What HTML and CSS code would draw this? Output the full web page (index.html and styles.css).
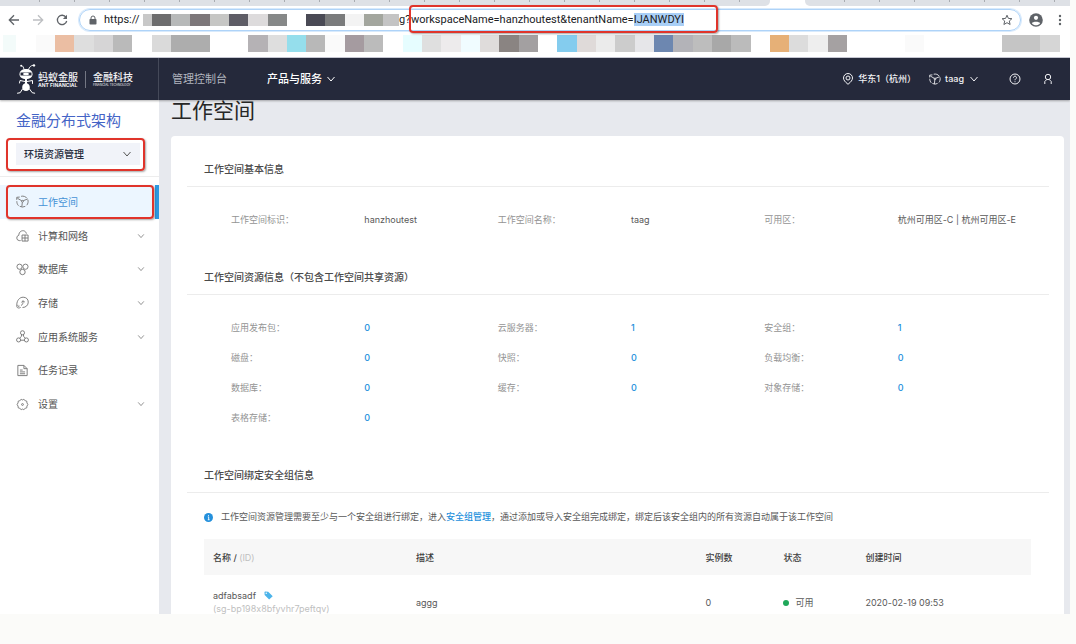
FILE: index.html
```html
<!DOCTYPE html>
<html lang="zh-CN">
<head>
<meta charset="utf-8">
<title>工作空间</title>
<link rel="stylesheet" href="styles.css">
</head>
<body>
<svg class="defs" aria-hidden="true">
  <symbol id="down" viewBox="0 0 10 10"><path d="M1.500 3 5 7l3.500-4"/></symbol>
  <symbol id="cube" viewBox="0 0 14 14"><path d="M.8 5.200V2.500L4 2.200M5.500 1.400C8 .8 10.500 1.700 11.800 3.500M12.800 5c.6 2.300.1 4.500-1.200 6M10 12.200l-3 .8-3-.8M2.700 11.500C1.500 10.300.8 8.500.9 6.700M1.500 3.500 6.300 6.300M7.700 6.200 12.500 4.300M6.800 7.800 6.300 12.800"/><circle cx="7" cy="6.800" r="1"/></symbol>
</svg>
<div class="window">
  <div class="tabs">
    <div class="tab-group tab-group-left"></div>
    <div class="tab-group tab-group-right"></div>
  </div>
  <div class="toolbar">
    <button class="tool" aria-label="后退"><svg width="12" height="12" viewBox="0 0 12 12"><path d="M11 6H1.500M6 1.300 1.300 6 6 10.700"/></svg></button>
    <button class="tool tool-off" aria-label="前进"><svg width="12" height="12" viewBox="0 0 12 12"><path d="M1 6h9.500M6 1.300 10.700 6 6 10.700"/></svg></button>
    <button class="tool" aria-label="刷新"><svg width="12" height="12" viewBox="0 0 12 12"><path d="M10 3.300A4.700 4.700 0 1 0 10.700 7"/><path d="M11 .8v4.100H6.900z" fill="currentColor" stroke="none"/></svg></button>
    <div class="address">
      <svg class="lock" width="8" height="10" viewBox="0 0 8 10"><rect x=".5" y="4" width="7" height="5.500" rx=".8" fill="#5f6368"/><path d="M2 4.500V3a2 2 0 0 1 4 0v1.500" fill="none" stroke="#5f6368"/></svg>
      <div class="url" role="textbox" aria-label="地址" contenteditable="true" spellcheck="false"><span class="scheme">https://</span><svg class="mask" width="256" height="12" viewBox="0 0 256 12" shape-rendering="crispEdges"><path fill="#c8c8c8" d="M0 0h9v12H0z"/><path fill="#6d6d6e" d="M9 0h19v12H9z"/><path fill="#b7b9b9" d="M28 0h19v12H28z"/><path fill="#7d777a" d="M47 0h20v12H47z"/><path fill="#c6c6c4" d="M67 0h19v12H67z"/><path fill="#5e5d66" d="M86 0h19v12H86z"/><path fill="#dddbdc" d="M105 0h20v12h-20z"/><path fill="#868888" d="M125 0h19v12h-19z"/><path fill="#4a4a55" d="M163 0h19v12h-19z"/><path fill="#7a7b7c" d="M182 0h20v12h-20z"/><path fill="#f3f3f3" d="M202 0h19v12h-19z"/><path fill="#a3a69e" d="M221 0h19v12h-19z"/><path fill="#c4c4c4" d="M240 0h16v12h-16z"/></svg><span class="tail">g?</span><span class="query">workspaceName=hanzhoutest&amp;tenantName=<mark>IJANWDYI</mark></span></div>
      <i class="callout callout-url"></i>
      <svg class="star" width="12" height="12" viewBox="0 0 12 12"><path d="m6 1.200 1.400 3.200 3.500.3-2.600 2.300.8 3.500L6 8.700l-3.100 1.800.8-3.500L1.100 4.700l3.500-.3z" fill="none" stroke="#5f6368"/></svg>
    </div>
    <button class="tool person" aria-label="用户"><svg width="14" height="14" viewBox="0 0 14 14"><circle cx="7" cy="7" r="6.800" fill="#5f6368" stroke="none"/><circle cx="7" cy="4.800" r="2.100" fill="#fff" stroke="none"/><path d="M2.900 10.300C3.700 8.300 10.300 8.300 11.100 10.300 9 13 5 13 2.900 10.300z" fill="#fff" stroke="none"/></svg></button>
    <button class="tool more" aria-label="更多"><svg width="4" height="12" viewBox="0 0 4 12"><g fill="#5f6368" stroke="none"><circle cx="2" cy="2" r="1.200"/><circle cx="2" cy="6" r="1.200"/><circle cx="2" cy="10" r="1.200"/></g></svg></button>
  </div>
  <div class="bookmarks">
    <svg width="1070" height="17" viewBox="0 0 1070 17" shape-rendering="crispEdges">
      <path fill="#f3fbfa" d="M3 0h13v17H3z"/><path fill="#fafafa" d="M36 0h19v17H36z"/><path fill="#ebbea3" d="M55 0h19v17H55z"/><path fill="#dedede" d="M74 0h20v17H74z"/><path fill="#d6d5d6" d="M94 0h19v17H94z"/><path fill="#bababa" d="M113 0h19v17h-19z"/>
      <path fill="#dadada" d="M152 0h19v17h-19z"/><path fill="#adadad" d="M171 0h39v17h-39z"/>
      <path fill="#b5b2b5" d="M248 0h20v17h-20z"/><path fill="#dedede" d="M268 0h19v17h-19z"/><path fill="#95deec" d="M287 0h19v17h-19z"/><path fill="#b8b8b8" d="M306 0h19v17h-19z"/><path fill="#fafafa" d="M325 0h20v17h-20z"/><path fill="#a59ba0" d="M345 0h19v17h-19z"/><path fill="#bbb" d="M364 0h19v17h-19z"/>
      <path fill="#e6fdff" d="M403 0h19v17h-19z"/><path fill="#dfdfdf" d="M422 0h19v17h-19z"/><path fill="#edebec" d="M441 0h20v17h-20z"/><path fill="#f0fcff" d="M461 0h19v17h-19z"/><path fill="#dfdcdb" d="M480 0h19v17h-19z"/><path fill="#8a8482" d="M499 0h20v17h-20z"/><path fill="#a3a0a1" d="M519 0h19v17h-19z"/>
      <path fill="#84ccee" d="M557 0h20v17h-20z"/><path fill="#dfdad9" d="M577 0h19v17h-19z"/><path fill="#ebebeb" d="M596 0h19v17h-19z"/><path fill="#ccc" d="M615 0h20v17h-20z"/><path fill="#e6e6e9" d="M635 0h19v17h-19z"/><path fill="#6d87b0" d="M654 0h19v17h-19z"/><path fill="#b3b3b8" d="M673 0h20v17h-20z"/><path fill="#bdbdbd" d="M693 0h19v17h-19z"/><path fill="#a8a8a8" d="M712 0h19v17h-19z"/><path fill="#bbb" d="M731 0h20v17h-20z"/>
      <path fill="#e6b077" d="M770 0h19v17h-19z"/><path fill="#dcdcdc" d="M789 0h19v17h-19z"/><path fill="#eee" d="M808 0h20v17h-20z"/><path fill="#a5a1a2" d="M828 0h19v17h-19z"/><path fill="#fafafa" d="M905 0h19v17h-19z"/><path fill="#c5c5c5" d="M1002 0h38v17h-38z"/><path fill="#d6d6d6" d="M1040 0h20v17h-20z"/>
    </svg>
  </div>

  <header class="header">
    <a class="brand" href="#">
      <svg width="22" height="32" viewBox="0 0 22 32" fill="none" stroke="#fff" stroke-linecap="round">
        <path d="M8 6.500C7.500 4 7 3 5.800 2.700M12.500 6.500c1-2.500 2-3.800 4.500-4.300" stroke-width=".9"/><circle cx="5.200" cy="2.800" r="1" fill="#fff" stroke="none"/><circle cx="18" cy="2.400" r="1.200" fill="#fff" stroke="none"/>
        <path d="M10 6c4 0 6.500 2.200 6.500 5.200S14 16 10 16s-6.500-1.800-6.500-4.800S6 6 10 6z" fill="#fff" stroke="none"/><path d="M4.500 9.500h11v3h-11z" fill="#25293b" stroke="none"/><ellipse cx="10" cy="11" rx="3" ry="1.300" fill="#fff" stroke="none"/>
        <path d="M9 16h2v4.500H9zM10 20c2.500 0 3.800 2.300 3.800 4.500S12.300 28 10 28s-3.800-1.300-3.800-3.500S7.500 20 10 20z" fill="#fff" stroke="none"/>
        <path d="M9 18.500 4 17.500 3.500 20M11 18.500l5.500-1v3M6.500 26l-2.300 3.700-2.700.5M13.500 26l2.700 3.700 2.500.5"/>
      </svg>
      <span class="brand-part"><b>蚂蚁金服</b><small>ANT FINANCIAL</small></span>
      <span class="brand-part brand-sub"><b>金融科技</b><small>FINANCIAL TECHNOLOGY</small></span>
    </a>
    <nav class="nav">
      <a href="#">管理控制台</a>
      <button class="strong">产品与服务<svg class="icon" width="10" height="10"><use href="#down"/></svg></button>
    </nav>
    <div class="account">
      <button class="region"><svg class="icon" width="12" height="12" viewBox="0 0 12 12"><path d="M6 11.300C3 8.900 1.500 7 1.500 5a4.500 4.500 0 0 1 9 0C10.500 7 9 8.900 6 11.300z"/><circle cx="6" cy="5" r="2"/></svg>华东1（杭州）</button>
      <button class="space"><svg class="icon" width="12" height="12"><use href="#cube"/></svg>taag<svg class="icon" width="10" height="10"><use href="#down"/></svg></button>
      <button class="help" aria-label="帮助"><svg class="icon" width="12" height="12" viewBox="0 0 12 12"><circle cx="6" cy="6" r="5"/><path d="M4.500 4.700C4.500 2.700 7.500 2.700 7.500 4.700 7.500 5.800 6 5.900 6 7.200M6 8.300v.9"/></svg></button>
      <button aria-label="个人"><svg class="icon" width="10" height="12" viewBox="0 0 10 12"><circle cx="5" cy="4" r="2.700"/><path d="M3.800 6.500 1.800 8.500V11M6.200 6.500l2 2V11"/></svg></button>
    </div>
  </header>

  <div class="body">
    <aside class="side">
      <h2 class="side-title">金融分布式架构</h2>
      <div class="picker">
        <select aria-label="模块"><option>环境资源管理</option></select>
        <svg class="icon picker-icon" width="10" height="10"><use href="#down"/></svg>
        <i class="callout callout-picker"></i>
      </div>
      <nav class="menu">
        <a class="item active" href="#"><svg class="icon" width="13" height="13"><use href="#cube"/></svg><span>工作空间</span><i class="callout callout-item"></i></a>
        <a class="item" href="#"><svg class="icon" width="13" height="13" viewBox="0 0 14 14"><path d="M5 12.500H3.500A2.900 2.900 0 0 1 3 6.800C3.200.8 10.300.3 11.200 5M6.500 6.500H13V13H6.500zM6.500 9.700H13M9.700 6.500V13"/></svg><span>计算和网络</span><svg class="icon arrow" width="8" height="8"><use href="#down"/></svg></a>
        <a class="item" href="#"><svg class="icon" width="13" height="13" viewBox="0 0 14 14"><circle cx="3.800" cy="4" r="2.800"/><circle cx="10.200" cy="4" r="2.800"/><circle cx="7" cy="9.700" r="2.900"/></svg><span>数据库</span><svg class="icon arrow" width="8" height="8"><use href="#down"/></svg></a>
        <a class="item" href="#"><svg class="icon" width="13" height="13" viewBox="0 0 14 14"><path d="M5 12.300C2 13.800.5 12.500.8 9.500 1 4.500 4 1.300 7.700 1.300c3.500 0 5.500 2.300 5.500 5.300 0 3.200-2.500 5.800-6.200 5.800M3.800 10.800c-1.300 1-2 .3-1.800-1.300M5.500 10.200c1.700-.8 2.300-2.500 2-5M5.800 6.800l1.700-1.600 2 1.300"/></svg><span>存储</span><svg class="icon arrow" width="8" height="8"><use href="#down"/></svg></a>
        <a class="item" href="#"><svg class="icon" width="13" height="13" viewBox="0 0 14 14"><circle cx="7" cy="3" r="2.200"/><circle cx="2.800" cy="10.700" r="2.200"/><circle cx="11.200" cy="10.700" r="2.200"/><path d="M6 5 5.800 7 3.900 8.800M8 5l.2 2 1.900 1.800M5 11h4"/></svg><span>应用系统服务</span><svg class="icon arrow" width="8" height="8"><use href="#down"/></svg></a>
        <a class="item" href="#"><svg class="icon" width="13" height="13" viewBox="0 0 14 14"><path d="M2 1.500h6.500L12 5v7.500H2zM8.500 1.500V5H12M4.200 6.500h3M4.200 8.500h5.600M4.200 10.500h5.600"/></svg><span>任务记录</span></a>
        <a class="item" href="#"><svg class="icon" width="13" height="13" viewBox="0 0 14 14"><path d="m5.600 1.500 1.400.6 1.400-.6 1.500 1.300 1.700.6.200 1.900 1 1.700-1 1.700-.2 1.900-1.700.6-1.500 1.300-1.400-.6-1.400.6-1.500-1.300-1.700-.6-.2-1.900-1-1.700 1-1.700.2-1.900 1.700-.6z"/><circle cx="7" cy="7" r="1"/></svg><span>设置</span><svg class="icon arrow" width="8" height="8"><use href="#down"/></svg></a>
      </nav>
    </aside>

    <main class="main">
      <h1 class="title">工作空间</h1>
      <div class="card">
        <section>
          <h3 class="head">工作空间基本信息</h3>
          <dl class="facts">
            <dt>工作空间标识：</dt><dd>hanzhoutest</dd><dt>工作空间名称：</dt><dd>taag</dd><dt>可用区：</dt><dd>杭州可用区-C | 杭州可用区-E</dd>
          </dl>
        </section>
        <section>
          <h3 class="head">工作空间资源信息（不包含工作空间共享资源）</h3>
          <dl class="facts">
            <dt>应用发布包：</dt><dd><a href="#">0</a></dd><dt>云服务器：</dt><dd><a href="#">1</a></dd><dt>安全组：</dt><dd><a href="#">1</a></dd>
            <dt>磁盘：</dt><dd><a href="#">0</a></dd><dt>快照：</dt><dd><a href="#">0</a></dd><dt>负载均衡：</dt><dd><a href="#">0</a></dd>
            <dt>数据库：</dt><dd><a href="#">0</a></dd><dt>缓存：</dt><dd><a href="#">0</a></dd><dt>对象存储：</dt><dd><a href="#">0</a></dd>
            <dt>表格存储：</dt><dd><a href="#">0</a></dd>
          </dl>
        </section>
        <section>
          <h3 class="head">工作空间绑定安全组信息</h3>
          <p class="note"><svg width="9" height="9" viewBox="0 0 10 10"><circle cx="5" cy="5" r="5" fill="#2490dc"/><path d="M4.200 4.300H5.200V7.500M4.200 7.500h2M5 2.200v1" stroke="#fff" fill="none"/></svg><span>工作空间资源管理需要至少与一个安全组进行绑定，进入<a href="#">安全组管理</a>，通过添加或导入安全组完成绑定，绑定后该安全组内的所有资源自动属于该工作空间</span></p>
          <table class="groups">
            <thead><tr><th class="c-name">名称 / <span class="muted">(ID)</span></th><th class="c-desc">描述</th><th class="c-count">实例数</th><th class="c-state">状态</th><th>创建时间</th></tr></thead>
            <tbody><tr>
              <td>adfabsadf<svg class="tag" width="9" height="9" viewBox="0 0 10 10"><path fill="#4db4ea" fill-rule="evenodd" d="M.5 1.200.7 4.500l5 5 4-3.800-5-5L1.200.5zM2.500 1.800a.8.8 0 1 1 0 1.600.8.8 0 0 1 0-1.600z"/></svg><br><span class="muted">(sg-bp198x8bfyvhr7peftqv)</span></td>
              <td>aggg</td><td>0</td><td><span class="dot"></span>可用</td><td>2020-02-19 09:53</td>
            </tr></tbody>
          </table>
        </section>
      </div>
    </main>
  </div>
</div>
</body>
</html>
```
FILE: styles.css
```css
* { box-sizing: border-box; }
body {
  margin: 0;
  height: 100vh;
  padding: 0 6px 30px 0;
  display: flex;
  overflow: hidden;
  background: #fbfbf9;
  color: #595959;
  font: 9px/14px Inter, "Noto Sans CJK SC", sans-serif;
  font-feature-settings: "calt" 0;
}
h1, h2, h3, p, dl, dd { margin: 0; font-weight: 400; }
a { color: inherit; text-decoration: none; }
button { display: flex; align-items: center; padding: 0; border: 0; background: none; color: inherit; font: inherit; }
svg { flex: none; }
.defs { position: absolute; width: 0; height: 0; }
.icon { fill: none; stroke: currentColor; stroke-width: 1; }

.window { flex: 1; min-width: 0; display: flex; flex-direction: column; overflow: hidden; background: #fff; }

/* browser chrome */
.tabs { flex: none; height: 6px; display: flex; gap: 35px; }
.tab-group { background: repeating-linear-gradient(90deg, transparent 0 34px, #a9acb1 34px 35px) 5px 0 / 100% 2px no-repeat #dee1e6; }
.tab-group-left { flex: 770; border-bottom-right-radius: 5px; }
.tab-group-right { flex: 265; border-bottom-left-radius: 5px; }
.toolbar { flex: none; height: 28px; display: flex; align-items: center; padding: 0 2px 0 8px; }
.tool { width: 24px; height: 24px; justify-content: center; flex: none; color: #5f6368; }
.tool svg { fill: none; stroke: currentColor; stroke-width: 1.300; }
.tool-off { color: #bdbfc2; }
.toolbar .tool:nth-child(-n+3) { margin-left: -6px; margin-right: 6px; }
.address { position: relative; flex: 1; min-width: 0; height: 22px; margin-left: -1px; display: flex; align-items: center; padding: 0 7px 0 9px; border: 1px solid #aed3f8; border-radius: 11px; box-shadow: 0 0 0 1px #d8eafc; }
.lock { margin-right: 7px; }
.url { flex: 1; display: flex; align-items: center; color: #202124; font: 11px/14px Roboto, sans-serif; white-space: nowrap; outline: 0; }
.scheme { width: 39px; }
.tail { width: 12px; }
mark { background: #a9cff6; color: inherit; }
.person { width: 30px; }
.more { width: 17px; }
.bookmarks { flex: none; height: 24px; padding-top: 1px; border-bottom: 1px solid #c9cad6; overflow: hidden; }
.bookmarks svg { display: block; }

.callout { position: absolute; border: 2px solid #e0342b; border-radius: 4px; box-shadow: 1px 1px 2px rgba(0, 0, 0, .35); pointer-events: none; }
.callout-url { left: 329px; top: -5px; width: 309px; height: 28px; }
.callout-picker { inset: -5px -5px -6px -10px; }
.callout-item { inset: 0 1px 0 6px; }

/* header */
.header { position: relative; flex: none; height: 42px; display: flex; align-items: center; background: #25293b; color: #f2f2f5; font-size: 11px; box-shadow: 0 1px 2px rgba(0, 0, 0, .3); }
.brand { width: 159px; height: 100%; display: flex; align-items: center; padding-left: 16px; border-right: 1px solid #454959; }
.brand-part { display: flex; flex-direction: column; white-space: nowrap; }
.brand-part b { font-size: 10px; line-height: 12px; font-weight: 500; }
.brand-part small { font-size: 5px; line-height: 5px; font-weight: 700; }
.brand-sub { margin-left: 7px; padding-left: 7px; border-left: 1px solid #747784; }
.brand-sub small { font-size: 3px; font-weight: 400; }
.nav { flex: 1; display: flex; gap: 40px; padding-left: 13px; color: #b2b5bf; }
.nav .icon { margin-left: 4px; }
.strong { color: #fff; font-weight: 500; }
.account { display: flex; font-size: 9px; font-weight: 500; padding-right: 17px; }
.region .icon, .space .icon:first-child { margin-right: 4px; }
.space { margin-left: 13px; }
.space .icon:last-child { margin-left: 5px; }
.help { margin: 0 22px 0 30px; }

/* sidebar */
.body { flex: 1; min-height: 0; display: flex; }
.side { width: 159px; flex: none; background: #fff; padding-top: 10px; color: #555; font-size: 10px; }
.side-title { padding-left: 16px; color: #4464c6; font-size: 15px; line-height: 22px; }
.picker { position: relative; margin: 11px 19px 11px 16px; height: 22px; display: flex; align-items: center; background: #f1f3f9; }
.picker select { appearance: none; width: 100%; height: 100%; padding: 0 8px; border: 0; background: none; color: #262b3d; font: 500 10px Inter, "Noto Sans CJK SC", sans-serif; }
.picker-icon { position: absolute; right: 8px; }
.menu { display: grid; grid-template-rows: repeat(7, 1fr); height: 245px; padding-top: 8px; border-top: 1px solid #ededed; }
.item { position: relative; display: flex; align-items: center; gap: 9px; padding: 0 14px 0 16px; }
.item span { flex: 1; }
.item .icon { color: #777; }
.active { background: #ecf6ff; color: #4592d6; border-right: 4px solid #2c98e0; }

/* content */
.main { flex: 1; min-width: 0; background: #e7e9ee; padding: 0 6px 0 12px; }
.title { height: 36px; color: #262626; font-size: 21px; line-height: 22px; }
.card { min-height: 100%; padding: 16px 15px 0 16px; background: #fff; border-radius: 4px; }
.head { height: 35px; padding-left: 17px; border-bottom: 1px solid #ececec; color: #4a4a4a; font-size: 10px; line-height: 34px; font-weight: 500; }
.facts { display: grid; grid-template-columns: repeat(6, 1fr); grid-auto-rows: 30px; align-items: center; margin: 18px 18px 25px 44px; white-space: nowrap; }
.facts dt { color: #949494; }
.facts a, .note a { color: #2490dc; font-weight: 500; }
.note { display: flex; align-items: center; gap: 8px; margin: 17px 17px 15px; }
.groups { width: calc(100% - 35px); margin-left: 17px; table-layout: fixed; border-collapse: collapse; line-height: 13px; text-align: left; white-space: nowrap; }
.groups th { height: 36px; padding: 0 9px; background: #f7f7f7; color: #404040; font-weight: 500; }
.groups td { padding: 14px 9px; vertical-align: middle; }
.c-name { width: 203px; }
.c-desc { width: 35%; }
.c-count { width: 78px; }
.c-state { width: 82px; }
.muted { color: #bfbfbf; font-weight: 400; }
.tag { margin-left: 8px; vertical-align: -1px; }
.dot { display: inline-block; width: 6px; height: 6px; margin-right: 6px; border-radius: 50%; background: #1fa85a; }
```
